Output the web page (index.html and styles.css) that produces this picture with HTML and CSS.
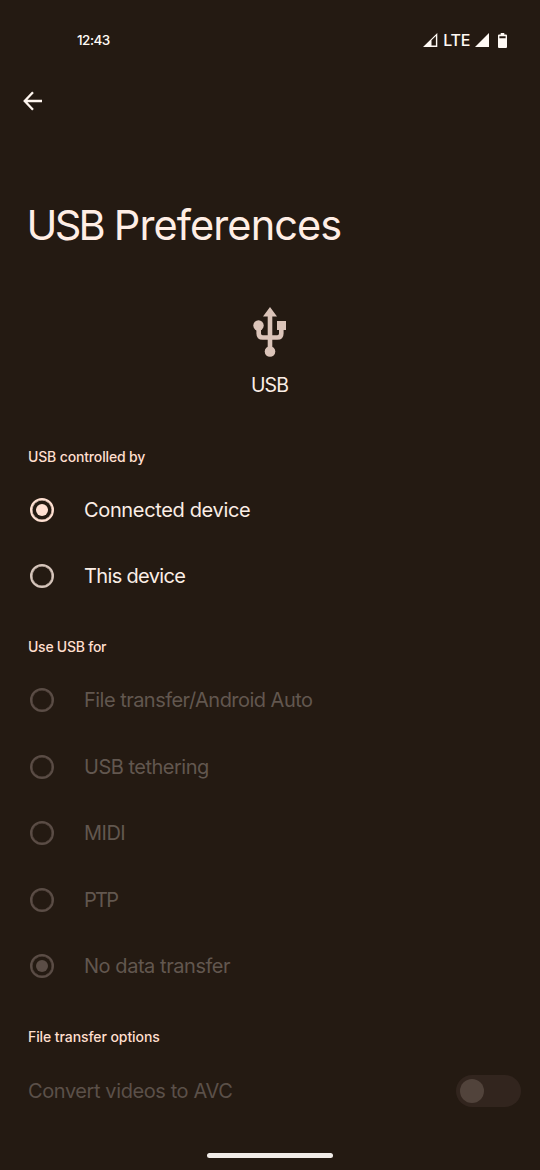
FILE: index.html
```html
<!DOCTYPE html>
<html lang="en">
<head>
<meta charset="utf-8">
<title>USB Preferences</title>
<link rel="stylesheet" href="styles.css">
</head>
<body>
<div class="screen">
  <header class="status">
    <span class="clock">12:43</span>
    <span class="indicators">
      <svg class="signal" width="15" height="14" viewBox="0 0 15 14"><path fill="currentColor" fill-rule="evenodd" d="M0 14 14.3 0V14ZM8.5 7.2V12.6H12.9V3Z"/></svg>
      <span class="network">LTE</span>
      <svg class="signal signal-full" width="15" height="14" viewBox="0 0 15 14"><path fill="currentColor" d="M0 14 14 0V14Z"/></svg>
      <svg class="battery" width="9" height="15" viewBox="0 0 9 15"><path fill="currentColor" fill-rule="evenodd" d="M2.7 0H6.3V1.6H8Q9 1.6 9 2.6V14Q9 15 8 15H1Q0 15 0 14V2.6Q0 1.6 1 1.6H2.7ZM1.4 3.2V5.2H7.6V3.2Z"/></svg>
    </span>
  </header>
  <nav class="toolbar">
    <svg width="20" height="20" viewBox="0 0 20 20" fill="none" stroke="currentColor" stroke-width="2.3"><path d="M19 10H2M10 1.2 1.7 10 10 18.8"/></svg>
  </nav>
  <h1 class="title"><span class="title-usb">USB</span> <span>Preferences</span></h1>
  <section class="hero">
    <svg width="36" height="50" viewBox="0 0 36 50"><g fill="none" stroke="currentColor" stroke-width="4.6"><path d="M18 8V43M6.7 19V26.5Q6.7 30.5 10.7 30.5H25.3Q29.3 30.5 29.3 26.5V19"/></g><path fill="currentColor" d="M18 0 25 9.5H11ZM25 14H34V23H25Z"/><circle cx="6.5" cy="18.5" r="5.2" fill="currentColor"/><circle cx="18" cy="44.5" r="5.3" fill="currentColor"/></svg>
    <span class="hero-label">USB</span>
  </section>
  <h2 class="category"><span class="t-controlled">USB controlled by</span></h2>
  <ul class="options">
    <li class="option"><i class="radio checked active"></i><span class="t-connected">Connected device</span></li>
    <li class="option"><i class="radio"></i><span class="t-this">This device</span></li>
  </ul>
  <h2 class="category"><span class="t-use">Use USB for</span></h2>
  <ul class="options disabled">
    <li class="option"><i class="radio"></i><span class="t-file">File transfer/Android Auto</span></li>
    <li class="option"><i class="radio"></i><span class="t-tether">USB tethering</span></li>
    <li class="option"><i class="radio"></i><span class="t-midi">MIDI</span></li>
    <li class="option"><i class="radio"></i><span class="t-ptp">PTP</span></li>
    <li class="option"><i class="radio checked"></i><span class="t-none">No data transfer</span></li>
  </ul>
  <h2 class="category"><span class="t-options">File transfer options</span></h2>
  <div class="toggle-row"><span class="t-convert">Convert videos to AVC</span><span class="switch"><i class="thumb"></i></span></div>
  <footer class="gesture"><i class="handle"></i></footer>
</div>
</body>
</html>
```
FILE: styles.css
```css
* { box-sizing: border-box; }
body { margin: 0; background: #241a12; font-family: Inter, Roboto, sans-serif; color: #fbeee6; }
.screen { width: 540px; height: 1170px; display: flex; flex-direction: column; overflow: hidden; }
.status { height: 80px; flex: none; display: flex; align-items: center; justify-content: space-between; padding: 0 33px 0 77px; color: #fffaf5; }
.clock { font-size: 13.5px; font-weight: 500; letter-spacing: -.5px; }
.indicators { display: flex; align-items: center; }
.signal { display: block; }
.network { font-size: 16px; font-weight: 500; margin: 0 5px; letter-spacing: -.3px; }
.battery { display: block; margin-left: 8px; }
.toolbar { height: 42px; flex: none; padding: 11px 0 0 23px; color: #fff6ef; }
.toolbar svg { display: block; }
.title { height: 184.5px; flex: none; margin: 0; padding: 78px 0 0 26.5px; font-size: 41.5px; line-height: 50px; font-weight: 400; letter-spacing: -.9px; white-space: nowrap; color: #ffeee5; }
.title-usb { letter-spacing: -2.7px; }
.hero { height: 124px; flex: none; display: flex; flex-direction: column; align-items: center; color: #dbc4b9; }
.hero svg { display: block; margin-top: .5px; }
.hero-label { font-size: 19.5px; line-height: 24px; margin-top: 16px; color: #fbeee6; letter-spacing: -.9px; padding-right: 1px; }
.category { height: 46px; flex: none; margin: 0; padding: 16px 28px 0; font-size: 14px; line-height: 20px; font-weight: 500; letter-spacing: -.15px; color: #ffdfce; white-space: nowrap; }
.options { list-style: none; margin: 0 0 11.5px; padding: 0; }
.option { height: 66.5px; display: flex; align-items: center; gap: 30px; padding-left: 30px; font-size: 20px; line-height: 26px; font-weight: 400; white-space: nowrap; }
.radio { width: 24px; height: 24px; border: 2px solid #d7c6bc; box-shadow: inset 0 0 0 .5px #d7c6bc; border-radius: 50%; display: grid; place-items: center; color: #d7c6bc; }
.radio.active { border-color: #ffe0d2; color: #ffe0d2; box-shadow: inset 0 0 0 .5px #ffe0d2; }
.checked::after { content: ""; width: 12px; height: 12px; border-radius: 50%; background: currentColor; }
.disabled { color: #62574f; }
.disabled .radio { border-color: #5b4d46; color: #5b4d46; box-shadow: inset 0 0 0 .5px #5b4d46; }
.t-connected { letter-spacing: -.35px; }
.t-this { letter-spacing: -.65px; }
.t-file { letter-spacing: -.53px; }
.t-tether { letter-spacing: -.5px; }
.t-midi { letter-spacing: -.5px; }
.t-ptp { letter-spacing: -1.7px; }
.t-none { letter-spacing: -.45px; }
.t-use { letter-spacing: -.25px; }
.t-options { letter-spacing: -.08px; }
.t-convert { letter-spacing: -.41px; }
.toggle-row { height: 67px; display: flex; align-items: center; justify-content: space-between; padding: 0 19px 0 28px; font-size: 20px; font-weight: 400; color: #5b5049; white-space: nowrap; }
.switch { width: 65px; height: 32px; border-radius: 16px; background: #32251e; display: flex; align-items: center; padding-left: 4px; }
.thumb { width: 24px; height: 24px; border-radius: 50%; background: #51433b; }
.gesture { margin-top: auto; height: 17px; display: flex; justify-content: center; }
.handle { width: 126px; height: 5px; border-radius: 3px; background: #f1ece8; }
```
